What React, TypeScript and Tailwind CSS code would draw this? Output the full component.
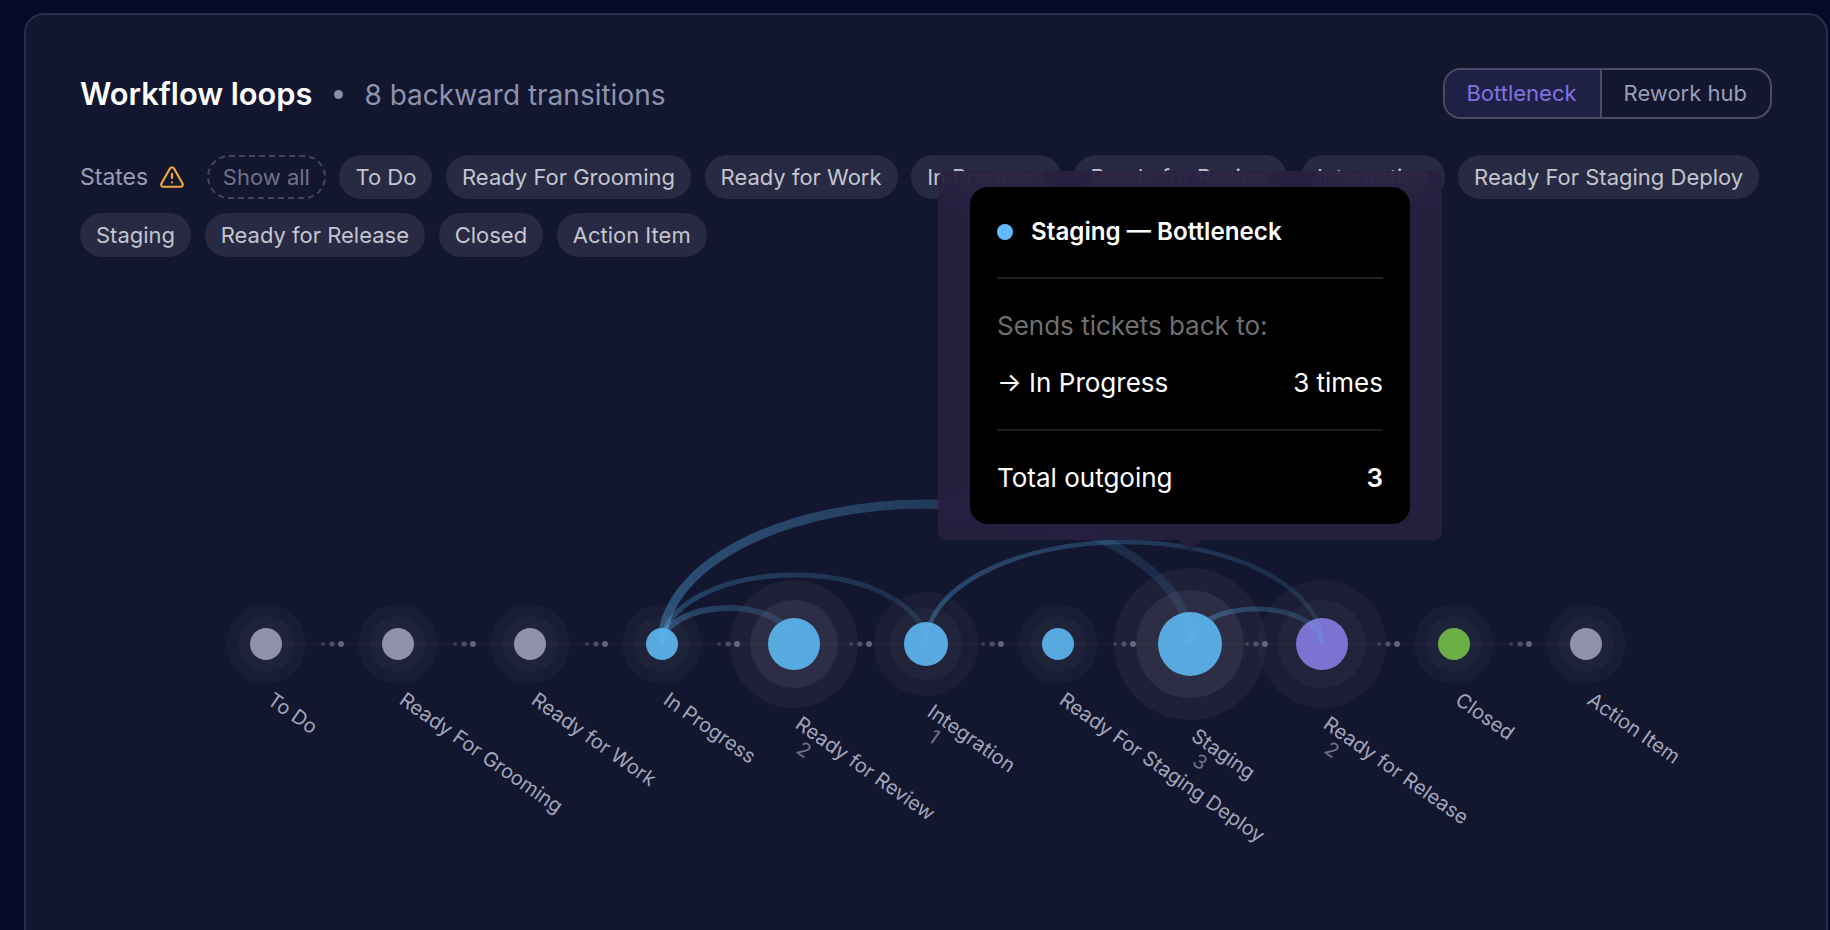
import { TriangleAlert } from 'lucide-react'

const states = ['To Do', 'Ready For Grooming', 'Ready for Work', 'In Progress', 'Ready for Review', 'Integration', 'Ready For Staging Deploy', 'Staging', 'Ready for Release', 'Closed', 'Action Item']

// core / middle ring / outer ring radius per node
const nodes = [
  { name: 'To Do', x: 266, r: [16, 28, 40], color: '#8f90aa', ring: 'soft' },
  { name: 'Ready For Grooming', x: 398, r: [16, 28, 40], color: '#8f90aa', ring: 'soft' },
  { name: 'Ready for Work', x: 530, r: [16, 28, 40], color: '#8f90aa', ring: 'soft' },
  { name: 'In Progress', x: 662, r: [16, 28, 40], color: '#58a9df', ring: 'soft' },
  { name: 'Ready for Review', x: 794, r: [26, 44, 64], color: '#58a9df', ring: 'strong', count: 2 },
  { name: 'Integration', x: 926, r: [22, 36, 52], color: '#58a9df', ring: 'mid', count: 1 },
  { name: 'Ready For Staging Deploy', x: 1058, r: [16, 28, 40], color: '#58a9df', ring: 'soft' },
  { name: 'Staging', x: 1190, r: [32, 54, 76], color: '#58a9df', ring: 'strong', count: 3 },
  { name: 'Ready for Release', x: 1322, r: [26, 44, 64], color: '#7c72d2', ring: 'mid', count: 2 },
  { name: 'Closed', x: 1454, r: [16, 28, 40], color: '#6bae45', ring: 'soft' },
  { name: 'Action Item', x: 1586, r: [16, 28, 40], color: '#8f90aa', ring: 'soft' },
]

const ringOpacity: Record<string, number[]> = {
  soft: [0.026, 0.03],
  mid: [0.035, 0.04],
  strong: [0.05, 0.07],
}

const arcs = [
  { id: 'a1', from: 662, to: 1190, ry: 140, width: 9, start: 0.36, end: 0.11 },
  { id: 'a2', from: 662, to: 926, ry: 69, width: 5, start: 0.28, end: 0.14 },
  { id: 'a3', from: 662, to: 794, ry: 36, width: 6, start: 0.32, end: 0.14 },
  { id: 'a4', from: 926, to: 1322, ry: 102, width: 4.5, start: 0.32, end: 0.13 },
  { id: 'a5', from: 1190, to: 1322, ry: 35, width: 5, start: 0.34, end: 0.16 },
]

const CY = 644

function LoopChart() {
  return (
    <svg width="1691" height="600" viewBox="80 257 1691 600" className="block shrink-0 overflow-visible">
      <defs>
        {arcs.map((a) => (
          <linearGradient key={a.id} id={a.id} gradientUnits="userSpaceOnUse" x1={a.from} y1="0" x2={a.to} y2="0">
            <stop offset="0" stopColor="#5ab4f0" stopOpacity={a.start} />
            <stop offset="1" stopColor="#5ab4f0" stopOpacity={a.end} />
          </linearGradient>
        ))}
      </defs>

      <line x1={266} y1={CY} x2={1586} y2={CY} stroke="#ffe8e8" strokeOpacity="0.025" strokeWidth="3" />

      {nodes.map((n) => (
        <g key={n.name}>
          <circle cx={n.x} cy={CY} r={n.r[2]} fill="#fff0f0" fillOpacity={ringOpacity[n.ring][0]} />
          <circle cx={n.x} cy={CY} r={n.r[1]} fill="#fff0f0" fillOpacity={ringOpacity[n.ring][1]} />
        </g>
      ))}

      {nodes.slice(0, -1).map((n) => (
        <g key={n.name} fill="#8b8ba5">
          <circle cx={n.x + 57} cy={CY} r="2" fillOpacity="0.3" />
          <circle cx={n.x + 66} cy={CY} r="2.6" fillOpacity="0.48" />
          <circle cx={n.x + 75} cy={CY} r="3" fillOpacity="0.65" />
        </g>
      ))}

      {nodes.map((n) => (
        <circle key={n.name} cx={n.x} cy={CY} r={n.r[0]} fill={n.color} />
      ))}

      {arcs.map((a) => (
        <path
          key={a.id}
          d={`M ${a.from} ${CY} A ${(a.to - a.from) / 2} ${a.ry} 0 0 1 ${a.to} ${CY}`}
          fill="none"
          stroke={`url(#${a.id})`}
          strokeWidth={a.width}
        />
      ))}

      {nodes.map((n) => {
        const x = n.x
        const y = CY + n.r[2] + 19
        return (
          <g key={n.name}>
            <text x={x} y={y} transform={`rotate(35 ${x} ${y})`} fontSize="20" fill="#a3a5b8">
              {n.name}
            </text>
            {n.count && (
              <text x={x + 1} y={y + 25} transform={`rotate(35 ${x + 1} ${y + 25})`} fontSize="20" fill="#6e7088">
                {n.count}
              </text>
            )}
          </g>
        )
      })}
    </svg>
  )
}

function Tooltip() {
  return (
    <div className="absolute left-[912px] top-[156px] h-[369px] w-[504px] rounded-lg bg-[#282040]/90 px-8 py-4 backdrop-blur-md">
      <div className="flex h-[337px] w-[440px] flex-col rounded-[18px] bg-black px-[27px] text-white">
        <div className="flex h-[92px] shrink-0 items-center gap-[18px] border-b-2 border-[#222226]">
          <span className="h-4 w-4 rounded-full bg-[#63bbff]" />
          <span className="text-[24.2px] font-semibold">Staging — Bottleneck</span>
        </div>
        <div className="flex h-[152px] shrink-0 flex-col border-b-2 border-[#1c1c20] pt-[29px]">
          <span className="text-[26px] leading-[36px] text-[#6f6f6f]">Sends tickets back to:</span>
          <div className="mt-[21px] flex items-center justify-between text-[26px] leading-[36px]">
            <span>→ In Progress</span>
            <span>3 times</span>
          </div>
        </div>
        <div className="flex flex-1 items-center justify-between text-[26px]">
          <span>Total outgoing</span>
          <span className="font-semibold">3</span>
        </div>
      </div>
      <div className="absolute left-[240px] top-full h-0 w-0 border-x-[12px] border-t-[11px] border-x-transparent border-t-[#282040]/80" />
    </div>
  )
}

export default function App() {
  return (
    <div className="h-[930px] overflow-hidden bg-[#050a28] pl-[24px] pr-[2px] pt-[13px] font-['Inter',sans-serif]">
      <div className="relative h-[1000px] rounded-[20px] border-2 border-[#2a2d4a] bg-[#12162f] px-[54px] pt-[53px]">
        <div className="flex h-[51px] items-center justify-between">
          <div className="flex items-center pt-[2px]">
            <h2 className="text-[30.8px] font-semibold text-white">Workflow loops</h2>
            <span className="ml-[22px] h-[9px] w-[9px] rounded-full bg-[#8b8ea8]" />
            <span className="ml-[21px] text-[28px] text-[#8f92ad]">8 backward transitions</span>
          </div>
          <div className="flex h-[51px] overflow-hidden rounded-[18px] border-2 border-[#4a4c66] text-[22px]">
            <button className="bg-[#1f2045] pl-[21px] pr-[23px] text-[#7f74e0]">Bottleneck</button>
            <button className="border-l-2 border-[#4a4c66] pl-[22px] pr-[23px] text-[#9a9cb5]">Rework hub</button>
          </div>
        </div>

        <div className="mt-[36px] flex flex-wrap items-center gap-x-[13.6px] gap-y-[14px] text-[22px]">
          <div className="mr-[8px] flex items-center gap-[11px] text-[23px] text-[#9a9cb5]">
            States
            <TriangleAlert size={26} strokeWidth={2} className="text-[#f0a63c]" />
          </div>
          <button className="h-[44px] rounded-full border-2 border-dashed border-[#44465c] px-[14px] text-[#6f7188]">Show all</button>
          {states.map((s) => (
            <span key={s} className="flex h-[44px] items-center rounded-full bg-[#272a42] px-4 text-[#c4c5cf]">
              {s}
            </span>
          ))}
        </div>

        <LoopChart />
        <Tooltip />
      </div>
    </div>
  )
}
